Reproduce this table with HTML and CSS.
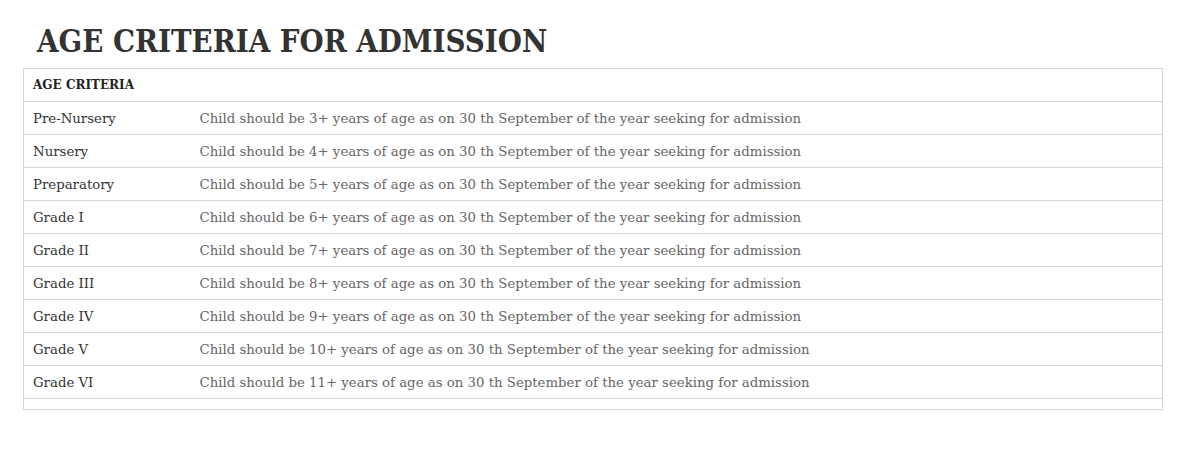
FILE: index.html
```html
<!DOCTYPE html>
<html>
<head>
<meta charset="utf-8">
<link rel="stylesheet" href="styles.css">
</head>
<body>
<div class="page">
  <h1 class="title">AGE CRITERIA FOR ADMISSION</h1>
  <table class="criteria">
    <colgroup><col class="col-grade"><col></colgroup>
    <tr class="head"><th colspan="2">AGE CRITERIA</th></tr>
    <tr><td class="grade">Pre-Nursery</td><td class="desc">Child should be 3+ years of age as on 30 th September of the year seeking for admission</td></tr>
    <tr><td class="grade">Nursery</td><td class="desc">Child should be 4+ years of age as on 30 th September of the year seeking for admission</td></tr>
    <tr><td class="grade">Preparatory</td><td class="desc">Child should be 5+ years of age as on 30 th September of the year seeking for admission</td></tr>
    <tr><td class="grade">Grade I</td><td class="desc">Child should be 6+ years of age as on 30 th September of the year seeking for admission</td></tr>
    <tr><td class="grade">Grade II</td><td class="desc">Child should be 7+ years of age as on 30 th September of the year seeking for admission</td></tr>
    <tr><td class="grade">Grade III</td><td class="desc">Child should be 8+ years of age as on 30 th September of the year seeking for admission</td></tr>
    <tr><td class="grade">Grade IV</td><td class="desc">Child should be 9+ years of age as on 30 th September of the year seeking for admission</td></tr>
    <tr><td class="grade">Grade V</td><td class="desc">Child should be 10+ years of age as on 30 th September of the year seeking for admission</td></tr>
    <tr><td class="grade">Grade VI</td><td class="desc">Child should be 11+ years of age as on 30 th September of the year seeking for admission</td></tr>
    <tr class="empty"><td colspan="2"></td></tr>
  </table>
</div>
</body>
</html>
```
FILE: styles.css
```css
html, body {
  margin: 0;
  padding: 0;
  background: #fff;
}
body {
  font-family: "DejaVu Serif", "Liberation Serif", serif;
}
.page {
  padding: 0 36px 0 23px;
}
.title {
  margin: 0;
  padding: 22px 0 8px 14px;
  font-family: "DejaVu Serif Condensed", "DejaVu Serif", serif;
  font-size: 30.8px;
  line-height: 38px;
  font-weight: bold;
  color: #333;
}
.criteria {
  width: 100%;
  table-layout: fixed;
  border-collapse: collapse;
  border: 1px solid #d6d6d6;
  font-size: 13.3px;
}
.col-grade {
  width: 176px;
}
.criteria th,
.criteria td {
  border-top: 1px solid #d6d6d6;
  height: 32px;
  padding: 0 9px;
  text-align: left;
  vertical-align: middle;
}
.criteria th {
  font-weight: bold;
  font-size: 12px;
  color: #222;
}
.grade {
  color: #333;
}
.criteria .desc {
  color: #666;
  padding-left: 0;
}
.criteria .empty td {
  height: 10px;
  padding: 0;
}
```
